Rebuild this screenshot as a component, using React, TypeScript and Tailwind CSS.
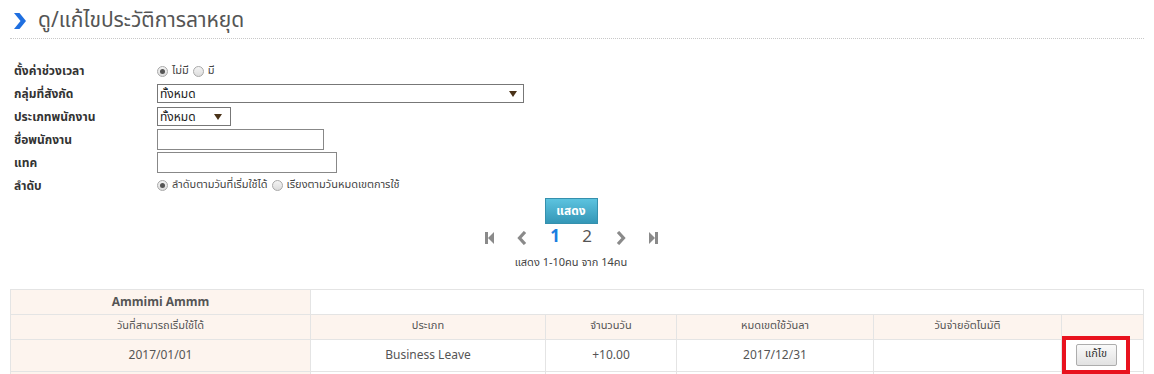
import React from "react";

const font = { fontFamily: 'Tahoma, "Noto Sans Thai", "Noto Sans", "Liberation Sans", sans-serif' };

function Radio({ checked }: { checked?: boolean }) {
  return (
    <span className="inline-flex w-[11px] h-[11px] rounded-full border border-[#a9a9a9] bg-gradient-to-b from-[#f4f4f4] to-[#dcdcdc] items-center justify-center mr-[4px]">
      {checked && <span className="w-[5px] h-[5px] rounded-full bg-[#555]" />}
    </span>
  );
}

function Arrow() {
  return (
    <svg width="8" height="8" viewBox="0 0 8 8">
      <path d="M0 1 H8 L4 7 Z" fill="#4a3218" />
    </svg>
  );
}

function NavIcon({ kind }: { kind: "first" | "prev" | "next" | "last" }) {
  const c = "#8a8a8a";
  return (
    <svg width="14" height="14" viewBox="0 0 14 14">
      {kind === "first" && (
        <>
          <rect x="2" y="1" width="3" height="12" fill={c} />
          <path d="M5 7 L11 1 V13 Z" fill={c} />
        </>
      )}
      {kind === "last" && (
        <>
          <rect x="9" y="1" width="3" height="12" fill={c} />
          <path d="M9 7 L3 1 V13 Z" fill={c} />
        </>
      )}
      {kind === "prev" && <path d="M9 1 L3.5 7 L9 13" stroke={c} strokeWidth="3.2" fill="none" />}
      {kind === "next" && <path d="M5 1 L10.5 7 L5 13" stroke={c} strokeWidth="3.2" fill="none" />}
    </svg>
  );
}

export default function App() {
  const label = "w-[143px] text-[12px] text-[#333] font-bold";
  return (
    <div className="w-[1154px] h-[374px] bg-white overflow-hidden text-[#444]" style={font}>
      {/* Title */}
      <div className="mx-[10px] pt-[8px] pb-[4px] border-b border-dotted border-[#c8c8c8] flex items-center">
        <svg width="14" height="18" viewBox="0 0 14 18" className="ml-[3px] mr-[11px]">
          <path d="M1 1 L6.5 1 L13 9 L6.5 17 L1 17 L7.5 9 Z" fill="#1f6fe0" />
        </svg>
        <span className="text-[21px] text-[#555] leading-[26px]">ดู/แก้ไขประวัติการลาหยุด</span>
      </div>

      {/* Form */}
      <div className="pl-[14px] pt-[21px] flex flex-col">
        <div className="flex items-center h-[22px]">
          <div className={label}>ตั้งค่าช่วงเวลา</div>
          <div className="flex items-center text-[11px] text-[#444]">
            <Radio checked /> <span className="mr-[4px]">ไม่มี</span>
            <Radio /> <span>มี</span>
          </div>
        </div>
        <div className="flex items-center h-[23px]">
          <div className={label}>กลุ่มที่สังกัด</div>
          <div className="w-[367px] h-[19px] border border-[#777] flex items-center justify-between px-[2px] text-[12px] text-[#222]">
            <span>ทั้งหมด</span>
            <span className="mr-[4px] flex"><Arrow /></span>
          </div>
        </div>
        <div className="flex items-center h-[23px]">
          <div className={label}>ประเภทพนักงาน</div>
          <div className="w-[74px] h-[19px] border border-[#777] flex items-center justify-between px-[2px] text-[12px] text-[#222]">
            <span>ทั้งหมด</span>
            <span className="mr-[6px] flex"><Arrow /></span>
          </div>
        </div>
        <div className="flex items-center h-[23px]">
          <div className={label}>ชื่อพนักงาน</div>
          <div className="w-[167px] h-[21px] border border-[#888]" />
        </div>
        <div className="flex items-center h-[23px]">
          <div className={label}>แทค</div>
          <div className="w-[180px] h-[21px] border border-[#888]" />
        </div>
        <div className="flex items-center h-[23px]">
          <div className={label}>ลำดับ</div>
          <div className="flex items-center text-[11px] text-[#444]">
            <Radio checked /> <span className="mr-[4px]">ลำดับตามวันที่เริ่มใช้ได้</span>
            <Radio /> <span>เรียงตามวันหมดเขตการใช้</span>
          </div>
        </div>
      </div>

      {/* Button + pagination */}
      <div className="flex flex-col items-center mt-[1px] pr-[12px]">
        <div className="h-[26px] w-[53px] flex items-center justify-center text-white text-[12px] font-bold bg-gradient-to-b from-[#5cc3df] to-[#3497b7] border border-[#3590ad]">
          แสดง
        </div>
        <div className="flex items-center h-[26px] mt-[1px] text-[17px]">
          <span className="flex w-[33px] justify-center"><NavIcon kind="first" /></span>
          <span className="flex w-[33px] justify-center"><NavIcon kind="prev" /></span>
          <span className="w-[32px] text-center text-[#1a7ee0] font-bold">1</span>
          <span className="w-[32px] text-center text-[#555]">2</span>
          <span className="flex w-[33px] justify-center"><NavIcon kind="next" /></span>
          <span className="flex w-[33px] justify-center"><NavIcon kind="last" /></span>
        </div>
        <div className="text-[11px] text-[#444] mt-[4px]">แสดง 1-10คน จาก 14คน</div>
      </div>

      {/* Table */}
      <div className="mx-[10px] mt-[17px] border-t border-l border-[#e4e4e4] text-[12px] text-[#555]">
        <div className="flex h-[25px]">
          <div className="w-[300px] bg-[#fdf4ee] border-r border-b border-[#e4e4e4] flex items-center justify-center font-bold text-[#555]">Ammimi Ammm</div>
          <div className="flex-1 border-r border-b border-[#e4e4e4]" />
        </div>
        <div className="flex h-[25px] bg-[#fdf4ee] text-[11px]">
          <div className="w-[300px] border-r border-b border-[#e4e4e4] flex items-center justify-center">วันที่สามารถเริ่มใช้ได้</div>
          <div className="w-[235px] border-r border-b border-[#e4e4e4] flex items-center justify-center">ประเภท</div>
          <div className="w-[131px] border-r border-b border-[#e4e4e4] flex items-center justify-center">จำนวนวัน</div>
          <div className="w-[197px] border-r border-b border-[#e4e4e4] flex items-center justify-center">หมดเขตใช้วันลา</div>
          <div className="w-[188px] border-r border-b border-[#e4e4e4] flex items-center justify-center">วันจ่ายอัตโนมัติ</div>
          <div className="flex-1 border-r border-b border-[#e4e4e4]" />
        </div>
        <div className="flex h-[32px]">
          <div className="w-[300px] bg-[#fdf4ee] border-r border-b border-[#e4e4e4] flex items-center justify-center">2017/01/01</div>
          <div className="w-[235px] border-r border-b border-[#e4e4e4] flex items-center justify-center">Business Leave</div>
          <div className="w-[131px] border-r border-b border-[#e4e4e4] flex items-center justify-center">+10.00</div>
          <div className="w-[197px] border-r border-b border-[#e4e4e4] flex items-center justify-center">2017/12/31</div>
          <div className="w-[188px] border-r border-b border-[#e4e4e4]" />
          <div className="flex-1 border-r border-b border-[#e4e4e4] relative">
            <div className="absolute left-[0px] top-[-4px] w-[68px] h-[38px] border-[4px] border-[#e8121e] flex items-center justify-center">
              <div className="w-[41px] h-[22px] border border-[#adadad] rounded-[2px] bg-gradient-to-b from-[#fafafa] to-[#e2e2e2] flex items-center justify-center text-[11px] text-[#333]">แก้ไข</div>
            </div>
          </div>
        </div>
        <div className="flex h-[20px]">
          <div className="w-[300px] bg-[#fdf4ee] border-r border-[#e4e4e4]" />
          <div className="w-[235px] border-r border-[#e4e4e4]" />
          <div className="w-[131px] border-r border-[#e4e4e4]" />
          <div className="w-[197px] border-r border-[#e4e4e4]" />
          <div className="w-[188px] border-r border-[#e4e4e4]" />
          <div className="flex-1 border-r border-[#e4e4e4]" />
        </div>
      </div>
    </div>
  );
}
